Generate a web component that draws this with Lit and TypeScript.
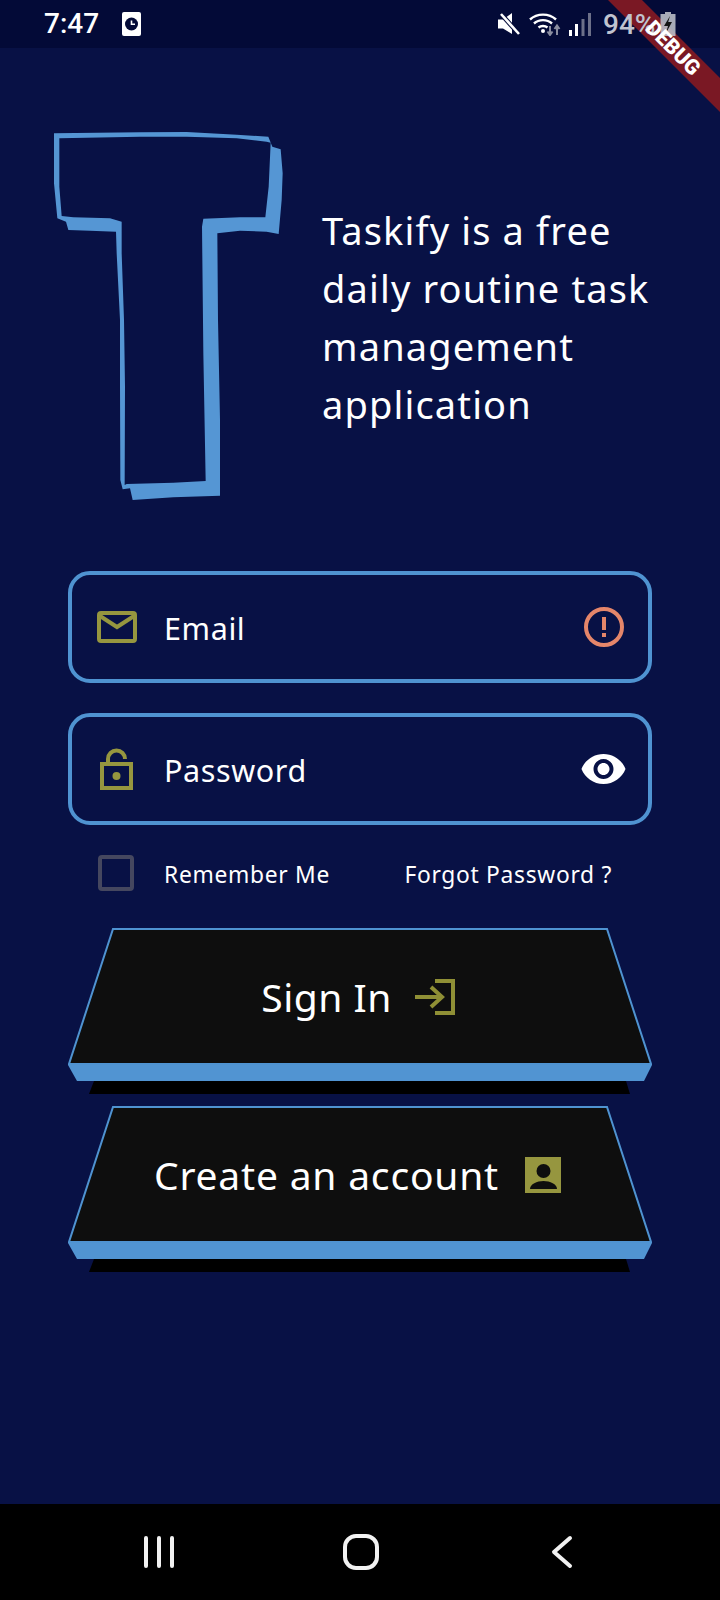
import { LitElement, html, css } from "lit";
import { customElement } from "lit/decorators.js";

const FACE = "#0e0e0e";
const EDGE = "#4f93d1";

function button3d() {
  return html`<svg class="btn-bg" width="584" height="166" viewBox="0 0 584 166">
    <polygon points="26,153 558,153 562,166 21,166" fill="#000"/>
    <polygon points="0,137 584,137 576,153 9,153" fill="#5194d2"/>
    <polygon points="45,1 539,1 583,136 1,136" fill="${FACE}" stroke="${EDGE}" stroke-width="2"/>
  </svg>`;
}

@customElement("app-root")
export class AppRoot extends LitElement {
  static styles = css`
    :host {
      display: flex;
      flex-direction: column;
      position: relative;
      width: 720px;
      height: 1600px;
      overflow: hidden;
      background: #081145;
      color: #fff;
      font-family: "Noto Sans", sans-serif;
    }
    svg { display: block; flex: none; }

    .status {
      height: 48px;
      flex: none;
      display: flex;
      align-items: center;
      background: #030a37;
      padding: 0 44px 0 44px;
    }
    .time {
      font-family: Roboto, sans-serif;
      font-weight: 500;
      font-size: 28px;
      line-height: 48px;
      width: 78px;
    }
    .status-right {
      margin-left: auto;
      display: flex;
      align-items: center;
      position: relative;
      z-index: 2;
    }
    .pct {
      font-family: Roboto, sans-serif;
      font-weight: 500;
      font-size: 28px;
      color: #c0c3cf;
      margin: 0 8px 0 12px;
      width: 49px;
      white-space: nowrap;
    }
    .wifi { margin: 0 8px 0 9px; }

    .ribbon {
      position: absolute;
      top: 36px;
      left: 588px;
      width: 170px;
      height: 24px;
      transform: rotate(45deg);
      background: #7a1824;
      z-index: 1;
    }
    .ribbon-text {
      position: absolute;
      top: 36px;
      left: 612px;
      width: 122px;
      height: 24px;
      transform: rotate(45deg);
      font-family: Roboto, sans-serif;
      font-weight: 900;
      font-size: 21px;
      line-height: 24px;
      text-align: center;
      z-index: 3;
    }

    main {
      flex: 1;
      display: flex;
      flex-direction: column;
      padding: 72px 0 0 0;
    }
    .hero {
      display: flex;
      align-items: center;
      padding-left: 40px;
      gap: 22px;
      height: 390px;
    }
    .tagline {
      font-size: 38px;
      line-height: 58px;
      letter-spacing: 1.15px;
      margin-top: 3px;
      white-space: nowrap;
    }
    .form {
      margin: 61px 68px 0;
      display: flex;
      flex-direction: column;
    }
    .field {
      box-sizing: border-box;
      height: 112px;
      border: 4px solid #4f93d1;
      border-radius: 22px;
      display: flex;
      align-items: center;
      margin-bottom: 30px;
    }
    .field:nth-child(2) { margin-bottom: 0; }
    .field-icon {
      width: 95px;
      display: flex;
      justify-content: center;
      flex: none;
      margin-left: -3px;
    }
    .label {
      font-size: 30.5px;
      letter-spacing: 0.6px;
      flex: 1;
      margin-top: 2px;
    }
    .trail { width: 45px; margin-right: 22px; display: flex; justify-content: center; }

    .options {
      display: flex;
      align-items: center;
      height: 76px;
      margin-top: 10px;
      box-sizing: border-box;
      font-size: 22.8px;
      letter-spacing: 0.7px;
    }
    .options span { margin-top: 2px; }
    .check {
      box-sizing: border-box;
      width: 36px;
      height: 36px;
      border: 4px solid #45475f;
      border-radius: 4px;
      margin-left: 30px;
      margin-right: 30px;
      flex: none;
    }
    .forgot { margin-left: auto; margin-right: 40px; }

    .btn {
      display: grid;
      width: 584px;
      height: 166px;
      margin-top: 17px;
    }
    .btn + .btn { margin-top: 12px; }
    .btn-bg, .btn-content { grid-area: 1 / 1; }
    .btn-content {
      height: 137px;
      display: flex;
      align-items: center;
      justify-content: center;
      font-size: 39px;
      letter-spacing: 0.5px;
      z-index: 1;
      box-sizing: border-box;
    }
    .g-signin { gap: 23px; padding-right: 4px; }
    .g-create { gap: 26px; letter-spacing: 0.8px; padding-right: 5px; }

    .nav {
      height: 96px;
      flex: none;
      background: #000;
      display: flex;
      align-items: center;
      justify-content: space-between;
      padding: 0 140px 0 141px;
    }
  `;

  render() {
    const olive = "#96963f";
    return html`
      <div class="status">
        <span class="time">7:47</span>
        <svg width="19" height="24" viewBox="0 0 19 24">
          <rect width="19" height="24" rx="2" fill="#fff"/>
          <circle cx="9.5" cy="12" r="6.5" fill="#030a37"/>
          <path d="M9.5 8.5V12.3H13" fill="none" stroke="#fff" stroke-width="1.6"/>
        </svg>
        <div class="status-right">
          <svg width="22" height="22" viewBox="0 0 22 22">
            <path d="M0 6.5H5L14 0V21L5 15.5H0Z" fill="#fff"/>
            <path d="M3 1L21 21" stroke="#030a37" stroke-width="4.6"/>
            <path d="M3 1L21 21" stroke="#fff" stroke-width="2.6"/>
          </svg>
          <svg class="wifi" width="32" height="24" viewBox="0 0 32 24">
            <g fill="none" stroke="#fff" stroke-width="2.4">
              <path d="M1 7.5C8 1 20 1 27 7.5"/>
              <path d="M5 11.5C10 7 18 7 23 11.5"/>
              <path d="M9.5 15.5C12 13.5 16 13.5 18.5 15.5"/>
            </g>
            <circle cx="14" cy="19" r="2" fill="#fff"/>
            <path d="M21 14V22M18.5 19.5L21 23L23.5 19.5" fill="none" stroke="#8a8da0" stroke-width="2"/>
            <path d="M28 23V14M25.5 17L28 13.5L30.5 17" fill="none" stroke="#8a8da0" stroke-width="2"/>
          </svg>
          <svg width="22" height="23" viewBox="0 0 22 23">
            <rect x="0" y="17" width="3" height="6" fill="#fff"/>
            <rect x="6" y="11" width="3" height="12" fill="#fff"/>
            <rect x="12.5" y="6" width="3" height="17" fill="#6d7089"/>
            <rect x="19" y="0" width="3" height="23" fill="#6d7089"/>
          </svg>
          <span class="pct">94%</span>
          <svg width="16" height="24" viewBox="0 0 16 24">
            <path d="M5 0H11V2H15.5V24H0.5V2H5Z" fill="#b9bcc7" opacity="0.9"/>
            <path d="M10 4L4 14H8L6 21L12 10H8.2Z" fill="#141414"/>
          </svg>
        </div>
      </div>
      <div class="ribbon"></div>
      <div class="ribbon-text">DEBUG</div>

      <main>
        <div class="hero">
          <svg width="260" height="390" viewBox="0 0 780 1170">
            <path fill="#5596d4" fill-rule="evenodd" d="M42 40L300 37L440 36L590 44L685 50L697 80L722 88L728 160L725 240L716 342L680 335L600 332L532 340L534 600L540 900L540 1127L400 1132L278 1140L270 1105L248 1108L241 1080L240 800L240 600L230 400L228 335L150 332L85 330L78 305L52 295L42 190Z
            M58 55L300 50L440 50L590 55L680 65L692 68L686 200L676 292L600 292L490 296L486 320L490 700L497 1083L400 1088L260 1092L254 1095L255 800L252 600L245 400L245 305L210 295L100 292L65 288L58 200Z"/>
          </svg>
          <div class="tagline">Taskify is a free<br>daily routine task<br>management<br>application</div>
        </div>

        <div class="form">
          <div class="field">
            <div class="field-icon">
              <svg width="40" height="32" viewBox="0 0 40 32" fill="none" stroke="${olive}" stroke-width="4">
                <rect x="2" y="2" width="36" height="28" rx="2"/>
                <path d="M3 5L20 16L37 5"/>
              </svg>
            </div>
            <span class="label">Email</span>
            <div class="trail">
              <svg width="40" height="40" viewBox="0 0 40 40">
                <circle cx="20" cy="20" r="18" fill="none" stroke="#e5866a" stroke-width="4"/>
                <rect x="18" y="10" width="4" height="13" fill="#e5866a"/>
                <rect x="18" y="26" width="4" height="4" fill="#e5866a"/>
              </svg>
            </div>
          </div>
          <div class="field">
            <div class="field-icon">
              <svg width="33" height="42" viewBox="0 0 33 42" fill="none" stroke="${olive}" stroke-width="4">
                <rect x="2" y="16" width="29" height="24"/>
                <path d="M8 15V11A8.5 8.5 0 0 1 25 11"/>
                <circle cx="16.5" cy="28" r="4" fill="${olive}" stroke="none"/>
              </svg>
            </div>
            <span class="label">Password</span>
            <div class="trail">
              <svg width="45" height="30" viewBox="1 4.5 22 15">
                <path fill="#fff" d="M12 4.5C7 4.5 2.73 7.61 1 12c1.73 4.39 6 7.5 11 7.5s9.27-3.11 11-7.5c-1.73-4.39-6-7.5-11-7.5zM12 17c-2.76 0-5-2.24-5-5s2.24-5 5-5 5 2.24 5 5-2.24 5-5 5zm0-8c-1.66 0-3 1.34-3 3s1.34 3 3 3 3-1.34 3-3-1.34-3-3-3z"/>
              </svg>
            </div>
          </div>
          <div class="options">
            <div class="check"></div>
            <span>Remember Me</span>
            <span class="forgot">Forgot Password ?</span>
          </div>

          <div class="btn">
            ${button3d()}
            <div class="btn-content g-signin">
              <span>Sign In</span>
              <svg width="40" height="36" viewBox="0 0 40 36" fill="none" stroke="#8f8f35" stroke-width="4">
                <path d="M20 2H38V34H20"/>
                <path d="M0 18H26M16 8L27 18L16 28"/>
              </svg>
            </div>
          </div>
          <div class="btn">
            ${button3d()}
            <div class="btn-content g-create">
              <span>Create an account</span>
              <svg width="36" height="36" viewBox="0 0 36 36">
                <rect width="36" height="36" fill="${olive}"/>
                <circle cx="18.5" cy="14" r="7" fill="${FACE}"/>
                <path d="M5 32C5 27 12 24 18.5 24S32 27 32 32Z" fill="${FACE}"/>
              </svg>
            </div>
          </div>
        </div>
      </main>

      <div class="nav">
        <svg width="36" height="36" viewBox="0 0 36 36" fill="none" stroke="#f2f2f2" stroke-width="4" stroke-linecap="round">
          <path d="M5 4V32M18 4V32M31 4V32"/>
        </svg>
        <svg width="36" height="36" viewBox="0 0 36 36" fill="none" stroke="#f2f2f2" stroke-width="4">
          <rect x="2" y="2" width="32" height="32" rx="11"/>
        </svg>
        <svg width="36" height="36" viewBox="0 0 36 36" fill="none" stroke="#f2f2f2" stroke-width="4" stroke-linecap="round" stroke-linejoin="round">
          <path d="M26 4L10 18L26 32"/>
        </svg>
      </div>
    `;
  }
}
